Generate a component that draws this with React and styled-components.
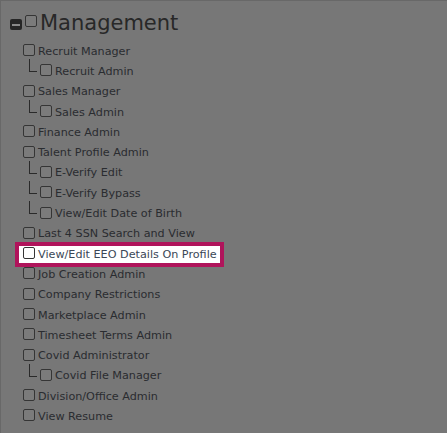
import React from "react";
import styled, { createGlobalStyle } from "styled-components";

const GlobalStyle = createGlobalStyle`
  html, body {
    margin: 0;
    padding: 0;
    background: #777777;
  }
  body {
    font-family: "DejaVu Sans", "Open Sans", sans-serif;
  }
`;

const Panel = styled.div`
  box-sizing: border-box;
  width: 460px;
  min-height: 440px;
  border-top: 1px solid #686868;
  border-left: 1px solid #686868;
  background: #777777;
  padding: 11px 0 0 9px;
`;

const Header = styled.div`
  display: flex;
  align-items: center;
  height: 22px;
  margin-bottom: 7px;
`;

const Toggle = styled.span`
  box-sizing: border-box;
  width: 12px;
  height: 11px;
  margin-top: 3px;
  border-radius: 2px;
  background: #262626;
  display: flex;
  align-items: center;
  justify-content: center;
  &::after {
    content: "";
    width: 8px;
    height: 2px;
    background: #8a8a8a;
  }
`;

const Box = styled.span`
  box-sizing: border-box;
  flex: none;
  width: 12px;
  height: 12px;
  border: 1.5px solid #353535;
  border-radius: 2px;
  background: ${(p) => (p.$light ? "#fff" : "#7b7b7b")};
  margin-top: ${(p) => p.$top || "-2px"};
`;

const Title = styled.span`
  font-size: 21px;
  color: #282828;
  margin-left: 3px;
  line-height: 22px;
`;

const List = styled.ul`
  list-style: none;
  margin: 0;
  padding: 0 0 0 13px;
`;

const Row = styled.li`
  position: relative;
  display: flex;
  align-items: center;
  height: 20.3px;
  padding-left: ${(p) => (p.$child ? "17px" : "0")};
  font-size: 11.2px;
  color: #2a2c30;
`;

const Connector = styled.span`
  position: absolute;
  left: 6px;
  top: -2px;
  width: 7px;
  height: 12px;
  border-left: 1px solid #2a2a2a;
  border-bottom: 1px solid #2a2a2a;
`;

const Label = styled.span`
  margin-left: 3px;
  white-space: nowrap;
`;

const Highlight = styled.span`
  display: inline-flex;
  align-items: center;
  margin-left: -4px;
  padding: 2px 3px 2px 4px;
  background: #ffffff;
  outline: 4px solid #b0145b;
  color: #3b4756;
`;

const items = [
  ["Recruit Manager"],
  ["Recruit Admin", 1],
  ["Sales Manager"],
  ["Sales Admin", 1],
  ["Finance Admin"],
  ["Talent Profile Admin"],
  ["E-Verify Edit", 1],
  ["E-Verify Bypass", 1],
  ["View/Edit Date of Birth", 1],
  ["Last 4 SSN Search and View"],
  ["View/Edit EEO Details On Profile", 0, true],
  ["Job Creation Admin"],
  ["Company Restrictions"],
  ["Marketplace Admin"],
  ["Timesheet Terms Admin"],
  ["Covid Administrator"],
  ["Covid File Manager", 1],
  ["Division/Office Admin"],
  ["View Resume"],
];

export default function App() {
  return (
    <>
      <GlobalStyle />
      <Panel>
        <Header>
          <Toggle />
          <Box $top="-4px" style={{ marginLeft: 3 }} />
          <Title>Management</Title>
        </Header>
        <List>
          {items.map(([name, child, active]) => (
            <Row key={name} $child={child}>
              {child ? <Connector /> : null}
              {active ? (
                <Highlight>
                  <Box $light />
                  <Label>{name}</Label>
                </Highlight>
              ) : (
                <>
                  <Box />
                  <Label>{name}</Label>
                </>
              )}
            </Row>
          ))}
        </List>
      </Panel>
    </>
  );
}
